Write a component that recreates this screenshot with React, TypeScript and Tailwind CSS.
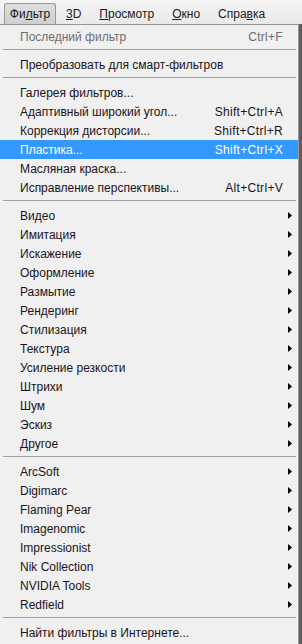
import React from 'react';

type Item =
  | { kind: 'item'; label: string; shortcut?: string; sub?: boolean; disabled?: boolean; active?: boolean }
  | { kind: 'sep' };

const items: Item[] = [
  { kind: 'item', label: 'Последний фильтр', shortcut: 'Ctrl+F', disabled: true },
  { kind: 'sep' },
  { kind: 'item', label: 'Преобразовать для смарт-фильтров' },
  { kind: 'sep' },
  { kind: 'item', label: 'Галерея фильтров...' },
  { kind: 'item', label: 'Адаптивный широкий угол...', shortcut: 'Shift+Ctrl+A' },
  { kind: 'item', label: 'Коррекция дисторсии...', shortcut: 'Shift+Ctrl+R' },
  { kind: 'item', label: 'Пластика...', shortcut: 'Shift+Ctrl+X', active: true },
  { kind: 'item', label: 'Масляная краска...' },
  { kind: 'item', label: 'Исправление перспективы...', shortcut: 'Alt+Ctrl+V' },
  { kind: 'sep' },
  ...['Видео', 'Имитация', 'Искажение', 'Оформление', 'Размытие', 'Рендеринг', 'Стилизация', 'Текстура', 'Усиление резкости', 'Штрихи', 'Шум', 'Эскиз', 'Другое'].map(
    (label) => ({ kind: 'item' as const, label, sub: true }),
  ),
  { kind: 'sep' },
  ...['ArcSoft', 'Digimarc', 'Flaming Pear', 'Imagenomic', 'Impressionist', 'Nik Collection', 'NVIDIA Tools', 'Redfield'].map(
    (label) => ({ kind: 'item' as const, label, sub: true }),
  ),
  { kind: 'sep' },
  { kind: 'item', label: 'Найти фильтры в Интернете...' },
];

function Arrow() {
  return (
    <svg width="4" height="7" viewBox="0 0 4 7" className="block">
      <path d="M0 0 L4 3.5 L0 7 Z" fill="#000" />
    </svg>
  );
}

export default function App() {
  return (
    <div className="w-[302px] h-[644px] overflow-hidden bg-[#5e5e5e] text-[12px] leading-none" style={{ fontFamily: "'Liberation Sans', Arial, sans-serif" }}>
      {/* menu bar */}
      <div className="h-[24px] bg-gradient-to-b from-[#f5f5f5] to-[#e9e9e9] flex items-end pl-[4px] text-[#1b1b1b]">
        <div className="h-[21px] w-[52px] rounded-t-[3px] border border-b-0 border-[#9a9a9a] bg-gradient-to-b from-[#dedede] to-[#cfcfcf] flex items-center justify-center">
          Фи<span className="underline">л</span>ьтр
        </div>
        <div className="h-[21px] flex items-center pl-[10px] gap-[18px]">
          <span><span className="underline">3</span>D</span>
          <span><span className="underline">П</span>росмотр</span>
          <span><span className="underline">О</span>кно</span>
          <span>Спра<span className="underline">в</span>ка</span>
        </div>
      </div>

      {/* dropdown */}
      <div className="w-[299px] h-[620px] bg-[#f0f0f0] border-t border-r border-[#979797] pt-[2px]">
        {items.map((it, i) =>
          it.kind === 'sep' ? (
            <div key={i} className="h-[9px] pt-[3px] pl-[3px] pr-[2px]">
              <div className="h-px bg-[#a0a0a0]" />
            </div>
          ) : (
            <div
              key={i}
              className={`h-[19px] flex items-center pl-[20px] pr-[6px] ${
                it.active ? 'bg-[#3399ff] text-white' : it.disabled ? 'text-[#6d6d6d]' : 'text-[#1b1320]'
              }`}
            >
              <span className="flex-1">{it.label}</span>
              {it.shortcut && <span className="pr-[9px] tracking-[0.3px]">{it.shortcut}</span>}
              {it.sub && <Arrow />}
            </div>
          ),
        )}
      </div>
    </div>
  );
}
